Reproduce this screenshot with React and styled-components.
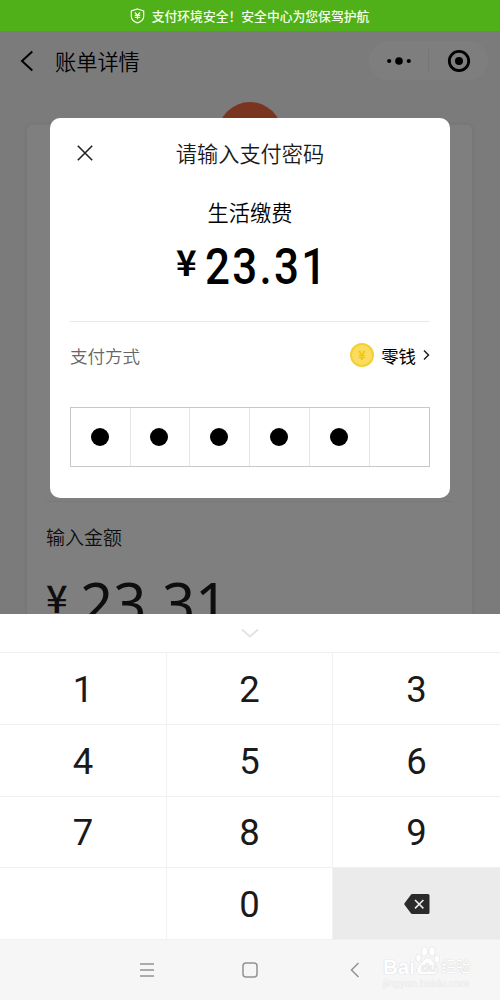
import React, { useState } from 'react';
import styled, { createGlobalStyle } from 'styled-components';

const GlobalStyle = createGlobalStyle`
  *, *::before, *::after {
    box-sizing: border-box;
  }

  body {
    margin: 0;
    font-family: 'Noto Sans CJK SC', 'Noto Sans', sans-serif;
    font-weight: 350;
    color: #000;
  }

  button {
    padding: 0;
    border: 0;
    background: none;
    font: inherit;
    color: inherit;
  }

  svg {
    display: block;
    flex: none;
  }
`;

const Screen = styled.div`
  display: flex;
  flex-direction: column;
  width: 500px;
  height: 1000px;
  overflow: hidden;
  background: #fff;
`;

const SafetyBar = styled.div`
  display: flex;
  align-items: center;
  justify-content: center;
  gap: 7px;
  flex: none;
  height: 31px;
  padding-right: 1px;
  background: #50b019;
  color: #f4ffe9;
  font-size: 12.8px;
  font-weight: 500;
  line-height: 30px;
`;

const Page = styled.main`
  position: relative;
  flex: none;
  height: 583px;
  overflow: hidden;
  background: #f6f6f6;
`;

const Header = styled.header`
  display: flex;
  align-items: center;
  height: 60px;
  padding: 0 12px 1px 20px;
`;

const PageTitle = styled.h1`
  flex: 1;
  margin: 0 0 0 21px;
  font-size: 21.2px;
  font-weight: 350;
  line-height: 30px;
`;

const Capsule = styled.div`
  display: flex;
  align-items: center;
  width: 119px;
  height: 39px;
  border-radius: 20px;
  background: #fcfcfc;
`;

const CapsuleButton = styled.button`
  display: flex;
  align-items: center;
  justify-content: center;
  flex: 1;
  height: 24px;

  & + & {
    border-left: 1px solid #ececec;
  }
`;

const Bill = styled.section`
  display: flex;
  flex-direction: column;
  height: 520px;
  margin: 34px 28px 0 27px;
  padding: 0 19px;
  border-radius: 5px;
  background: #fff;
  box-shadow: 0 0 5px rgba(0, 0, 0, 0.08);
`;

const Merchant = styled.div`
  height: 377px;
  border-bottom: 1px solid #f0f0f0;
`;

const MerchantLogo = styled.div`
  width: 64px;
  height: 64px;
  margin: -23px auto 0;
  border-radius: 50%;
  background: #f56a40;
`;

const AmountLabel = styled.div`
  margin-top: 20px;
  font-size: 19px;
  line-height: 30px;
  color: #1c1c1c;
`;

const Amount = styled.div`
  display: flex;
  align-items: flex-start;
  margin-top: 18px;
  color: #1c1c1c;
`;

const AmountSign = styled.span`
  width: 34px;
  font-size: 38px;
  font-weight: 500;
  line-height: 54px;
`;

const AmountValue = styled.span`
  font-family: 'Noto Sans', sans-serif;
  font-size: 58px;
  font-weight: 400;
  line-height: 66px;
`;

const Mask = styled.div`
  position: absolute;
  inset: 0;
  display: flex;
  align-items: flex-start;
  justify-content: center;
  padding-top: 87px;
  background: rgba(0, 0, 0, 0.5);
`;

const Dialog = styled.div`
  display: flex;
  flex-direction: column;
  width: 400px;
  height: 380px;
  padding: 19px 20px 20px;
  border-radius: 10px;
  background: #fff;
`;

const DialogHeader = styled.div`
  display: grid;
  grid-template-columns: 30px 1fr 30px;
  align-items: center;
  height: 32px;
`;

const CloseButton = styled.button`
  display: flex;
  justify-content: center;
`;

const DialogTitle = styled.h2`
  margin: 0;
  font-size: 21.2px;
  font-weight: 350;
  line-height: 32px;
  text-align: center;
  color: #1a1a1a;
`;

const Payee = styled.div`
  margin-top: 28px;
  font-size: 21.2px;
  line-height: 30px;
  text-align: center;
`;

const Price = styled.div`
  display: flex;
  height: 95px;
  padding-left: 106px;
  border-bottom: 1px solid #e8e8e8;
`;

const PriceSign = styled.span`
  width: 29px;
  font-size: 35px;
  font-weight: 700;
  line-height: 68px;
`;

// narrow digits with wide gaps, close to the wallet's number font
const PriceValue = styled.span`
  font-family: Roboto, 'Noto Sans', sans-serif;
  font-size: 50.5px;
  font-weight: 550;
  line-height: 80px;
  letter-spacing: 2.6px;
  transform: scaleX(0.87);
  transform-origin: left;
`;

const Method = styled.div`
  display: flex;
  align-items: center;
  height: 66px;
  font-size: 17.5px;
`;

const MethodLabel = styled.span`
  flex: 1;
  color: #666;
`;

const MethodName = styled.span`
  margin: 0 7px 0 7px;
  font-size: 17.4px;
  font-weight: 400;
`;

const Coin = styled.span`
  display: flex;
  align-items: center;
  justify-content: center;
  width: 24px;
  height: 24px;
  border: 2px solid #f2cf35;
  border-radius: 50%;
  background: #fbdc5e;
  color: #f0c800;
  font-size: 13px;
  font-weight: 700;
  line-height: 20px;
`;

const Password = styled.div`
  display: grid;
  grid-template-columns: 58.5px repeat(4, 59.8px) 1fr;
  height: 60px;
  margin-top: 19px;
  border: 1px solid #c8c8c8;
`;

const PasswordCell = styled.div`
  display: flex;
  align-items: center;
  justify-content: center;

  & + & {
    border-left: 1px solid #e6e6e6;
  }
`;

const Dot = styled.span`
  width: 18px;
  height: 18px;
  margin-right: 1px;
  border-radius: 50%;
  background: #000;
`;

const Collapse = styled.button`
  display: flex;
  align-items: center;
  justify-content: center;
  flex: none;
  height: 38px;
  background: #fff;
`;

const Keypad = styled.div`
  display: grid;
  grid-template-columns: 167px 166px 167px;
  grid-template-rows: repeat(4, 1fr);
  flex: none;
  height: 288px;
  border-bottom: 1px solid #f0f0f0;
`;

const Key = styled.button`
  display: flex;
  align-items: center;
  justify-content: center;
  border-top: 1px solid #f1f1f1;
  border-right: 1px solid #f1f1f1;
  background: ${({ muted }) => (muted ? '#ebebeb' : '#fff')};
  font-family: Roboto, 'Noto Sans', sans-serif;
  font-size: 36.5px;
  font-weight: 450;
  line-height: 50px;
  color: #1a1a1a;

  &:nth-child(3n) {
    border-right: 0;
  }
`;

const KeyLabel = styled.span`
  padding-top: 3px;
`;

const SystemNav = styled.nav`
  position: relative;
  display: flex;
  align-items: center;
  justify-content: center;
  gap: 88px;
  flex: 1;
  background: #f6f6f6;
`;

const Watermark = styled.div`
  position: absolute;
  left: 383px;
  top: 6px;
  width: 92px;
  color: #fff;
  text-shadow: 0 0 1px #ccc, 0 0 1px #ddd;
`;

const WatermarkBrand = styled.div`
  display: flex;
  align-items: flex-end;
  height: 31px;
  font-family: 'Liberation Sans', 'Noto Sans CJK SC', sans-serif;
  font-size: 20.5px;
  font-weight: 700;
  line-height: 21px;
`;

const WatermarkName = styled.span`
  margin-left: 1px;
  font-size: 15px;
  font-weight: 400;
`;

const WatermarkUrl = styled.div`
  font-family: 'Liberation Sans', sans-serif;
  font-size: 10.7px;
  line-height: 13px;
  color: #f3f3f3;
  text-shadow: 0 0 1px #dcdcdc;
`;

const ShieldIcon = () => (
  <svg width="15" height="16" viewBox="0 0 15 16" fill="none" stroke="#f4ffe9" strokeWidth="1.2">
    <path d="M7.5 1 13.7 3v5.2c0 3-2.4 5.3-6.2 6.7-3.8-1.4-6.2-3.7-6.2-6.7V3z" />
    <path d="M5 4.5 7.5 7.3 10 4.5M4.8 7.3h5.4M4.8 9.3h5.4M7.5 7.3v4" />
  </svg>
);

const BackIcon = () => (
  <svg width="14" height="22" viewBox="0 0 14 22" fill="none" stroke="#000" strokeWidth="2">
    <path d="M12.3 1.5 2 11l10.3 9.5" />
  </svg>
);

const MoreIcon = () => (
  <svg width="24" height="8" viewBox="0 0 24 8">
    <circle cx="2.2" cy="4" r="2.1" />
    <circle cx="12" cy="4" r="3.8" />
    <circle cx="21.8" cy="4" r="2.1" />
  </svg>
);

const TargetIcon = () => (
  <svg width="24" height="24" viewBox="0 0 24 24">
    <circle cx="12" cy="12" r="9.7" fill="none" stroke="#000" strokeWidth="2.8" />
    <circle cx="12" cy="12" r="4" />
  </svg>
);

const CloseIcon = () => (
  <svg width="16" height="16" viewBox="0 0 16 16" fill="none" stroke="#222" strokeWidth="1.6">
    <path d="m.8.8 14.4 14.4M15.2.8.8 15.2" />
  </svg>
);

const ArrowIcon = () => (
  <svg width="7" height="12" viewBox="0 0 7 12" fill="none" stroke="#222" strokeWidth="1.5">
    <path d="m1 1.5 4.5 4.5L1 10.5" />
  </svg>
);

const CollapseIcon = () => (
  <svg width="18" height="10" viewBox="0 0 18 10" fill="none" stroke="#e2e2e2" strokeWidth="1.8">
    <path d="m1 1.5 8 7 8-7" />
  </svg>
);

const DeleteIcon = () => (
  <svg width="26" height="20" viewBox="0 0 26 20">
    <path
      d="M8.3 0H24a1.5 1.5 0 0 1 1.5 1.5v17A1.5 1.5 0 0 1 24 20H8.3c-.6 0-1-.2-1.4-.7L.7 11a1.6 1.6 0 0 1 0-2L6.9.7c.4-.5.8-.7 1.4-.7z"
      fill="#2b2b2b"
    />
    <path d="m11 6 8.4 8.4M19.4 6 11 14.4" stroke="#ebebeb" strokeWidth="1.6" />
  </svg>
);

const MenuIcon = () => (
  <svg width="16" height="14" viewBox="0 0 16 14" stroke="#929292" strokeWidth="1.4">
    <path d="M2 1h14M2 7h14M2 13h14" />
  </svg>
);

const HomeIcon = () => (
  <svg width="16" height="16" viewBox="0 0 16 16" fill="none" stroke="#929292" strokeWidth="1.5">
    <rect x="1" y="1" width="14" height="14" rx="3" />
  </svg>
);

const NavBackIcon = () => (
  <svg width="16" height="16" viewBox="0 0 16 16" fill="none" stroke="#929292" strokeWidth="1.5">
    <path d="M12.5 1 5.5 8l7 7" />
  </svg>
);

const Paw = styled.span`
  position: relative;
  width: 25px;
  height: 31px;
`;

const PawText = styled.span`
  position: absolute;
  left: 6px;
  bottom: 2px;
  font-size: 13px;
  line-height: 14px;
  color: #f3f3f3;
  text-shadow: 0 0 1px #bbb;
`;

const PawIcon = () => (
  <svg width="25" height="31" viewBox="0 0 25 31" fill="#fff" stroke="#e2e2e2" strokeWidth=".7">
    <ellipse cx="9.5" cy="5.5" rx="3" ry="4.6" />
    <ellipse cx="17" cy="5.5" rx="3" ry="4.6" />
    <ellipse cx="3.5" cy="12" rx="2.7" ry="4" />
    <ellipse cx="22" cy="13" rx="2.7" ry="4" />
    <path d="M12.7 12c4 0 5 4.5 7.8 7 4.5 4.5 2.5 9.5-2.5 9.5H7c-5.5 0-7-5-2.5-9.5 3-2.5 4-7 8.2-7z" />
  </svg>
);

const KEYS = ['1', '2', '3', '4', '5', '6', '7', '8', '9', '', '0', 'delete'];
const PASSWORD_LENGTH = 6;

const App = () => {
  const [password, setPassword] = useState('00000');

  const handleKey = (key) => {
    if (key === 'delete') {
      setPassword(password.slice(0, -1));
      return;
    }
    setPassword((password + key).slice(0, PASSWORD_LENGTH));
  };

  return (
    <Screen>
      <GlobalStyle />
      <SafetyBar>
        <ShieldIcon />
        支付环境安全！安全中心为您保驾护航
      </SafetyBar>
      <Page>
        <Header>
          <BackIcon />
          <PageTitle>账单详情</PageTitle>
          <Capsule>
            <CapsuleButton>
              <MoreIcon />
            </CapsuleButton>
            <CapsuleButton>
              <TargetIcon />
            </CapsuleButton>
          </Capsule>
        </Header>
        <Bill>
          <Merchant>
            <MerchantLogo />
          </Merchant>
          <AmountLabel>输入金额</AmountLabel>
          <Amount>
            <AmountSign>¥</AmountSign>
            <AmountValue>23.31</AmountValue>
          </Amount>
        </Bill>
        <Mask>
          <Dialog>
            <DialogHeader>
              <CloseButton>
                <CloseIcon />
              </CloseButton>
              <DialogTitle>请输入支付密码</DialogTitle>
            </DialogHeader>
            <Payee>生活缴费</Payee>
            <Price>
              <PriceSign>¥</PriceSign>
              <PriceValue>23.31</PriceValue>
            </Price>
            <Method>
              <MethodLabel>支付方式</MethodLabel>
              <Coin>¥</Coin>
              <MethodName>零钱</MethodName>
              <ArrowIcon />
            </Method>
            <Password>
              {Array.from({ length: PASSWORD_LENGTH }, (_, index) => (
                <PasswordCell key={index}>{index < password.length && <Dot />}</PasswordCell>
              ))}
            </Password>
          </Dialog>
        </Mask>
      </Page>
      <Collapse>
        <CollapseIcon />
      </Collapse>
      <Keypad>
        {KEYS.map((key) => (
          <Key key={key} muted={key === 'delete' ? 1 : undefined} onClick={() => handleKey(key)}>
            {key === 'delete' ? <DeleteIcon /> : <KeyLabel>{key}</KeyLabel>}
          </Key>
        ))}
      </Keypad>
      <SystemNav>
        <MenuIcon />
        <HomeIcon />
        <NavBackIcon />
        <Watermark>
          <WatermarkBrand>
            Bai
            <Paw>
              <PawIcon />
              <PawText>du</PawText>
            </Paw>
            <WatermarkName>经验</WatermarkName>
          </WatermarkBrand>
          <WatermarkUrl>jingyan.baidu.com</WatermarkUrl>
        </Watermark>
      </SystemNav>
    </Screen>
  );
};

export default App;
